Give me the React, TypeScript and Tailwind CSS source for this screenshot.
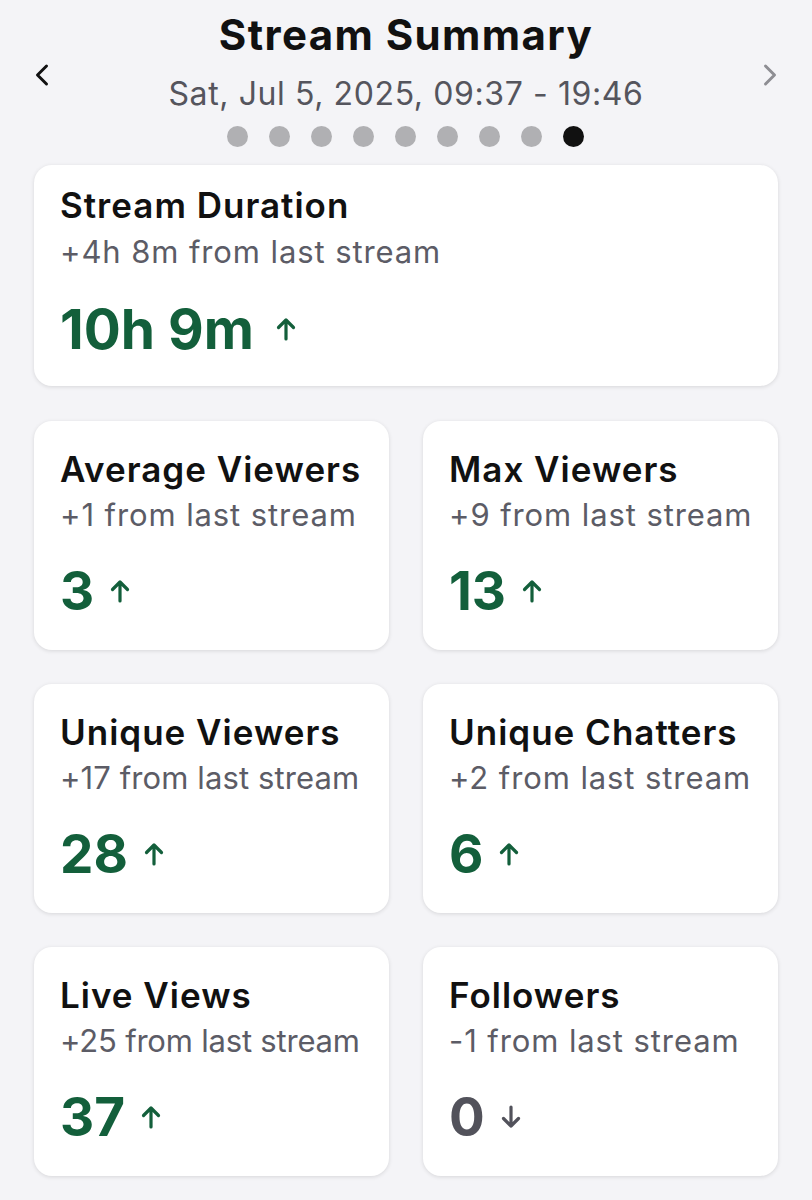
import { ChevronLeft, ChevronRight } from "lucide-react";

type Stat = {
  title: string;
  delta: string;
  value: string;
  up: boolean;
  // the app shrinks long lines to fit, so a few rows sit tighter
  tight?: string;
};

const stats: Stat[] = [
  { title: "Average Viewers", delta: "+1 from last stream", value: "3", up: true },
  { title: "Max Viewers", delta: "+9 from last stream", value: "13", up: true },
  {
    title: "Unique Viewers",
    delta: "+17 from last stream",
    value: "28",
    up: true,
    tight: "tracking-[0.1px]",
  },
  { title: "Unique Chatters", delta: "+2 from last stream", value: "6", up: true },
  {
    title: "Live Views",
    delta: "+25 from last stream",
    value: "37",
    up: true,
    tight: "tracking-[-0.2px]",
  },
  { title: "Followers", delta: "-1 from last stream", value: "0", up: false },
];

const Arrow = ({ up }: { up: boolean }) => (
  <svg
    width="20"
    height="24"
    viewBox="0 0 20 24"
    fill="none"
    stroke="currentColor"
    strokeWidth="3.2"
    strokeLinecap="round"
    strokeLinejoin="round"
    className={up ? "" : "rotate-180"}
  >
    <path d="M10 22V3M2.5 10.5L10 3l7.5 7.5" />
  </svg>
);

const StatCard = ({ stat }: { stat: Stat }) => (
  <div className="bg-white rounded-[18px] shadow-[0_1px_4px_rgba(0,0,0,0.12)] pl-[26px] pr-2 pt-[26px] h-[229px]">
    <div className="text-[35px] font-semibold text-[#111] leading-[44px] tracking-[1px] whitespace-nowrap">
      {stat.title}
    </div>
    <div
      className={`text-[31px] text-[#5c5c66] leading-[40px] mt-[4px] whitespace-nowrap ${
        stat.tight ?? "tracking-[0.9px]"
      }`}
    >
      {stat.delta}
    </div>
    <div
      className={`flex items-center gap-[16px] mt-[28px] ${
        stat.up ? "text-[#135f3b]" : "text-[#52525b]"
      }`}
    >
      <span className="text-[53px] font-bold leading-[56px]">{stat.value}</span>
      <Arrow up={stat.up} />
    </div>
  </div>
);

export default function App() {
  return (
    <div
      className="w-[812px] h-[1200px] bg-[#f4f4f7] overflow-hidden"
      style={{ fontFamily: "Inter, 'Noto Sans', sans-serif" }}
    >
      <div className="flex items-center justify-between px-[24px] pt-[8px]">
        <ChevronLeft size={36} strokeWidth={2} className="text-[#111] mt-[-6px]" />
        <div className="flex flex-col items-center">
          <div className="text-[42px] font-bold text-[#111] leading-[54px] tracking-[1.4px]">
            Stream Summary
          </div>
          <div className="text-[32px] text-[#55555d] leading-[40px] mt-[12px] tracking-[0.6px]">
            Sat, Jul 5, 2025, 09:37 - 19:46
          </div>
          <div className="flex gap-[21px] mt-[12px]">
            {Array.from({ length: 9 }).map((_, i) => (
              <div
                key={i}
                className={`w-[21px] h-[21px] rounded-full ${
                  i === 8 ? "bg-[#111]" : "bg-[#b0b0b3]"
                }`}
              />
            ))}
          </div>
        </div>
        <ChevronRight size={36} strokeWidth={2} className="text-[#8e8e93] mt-[-6px]" />
      </div>

      <div className="px-[34px] pt-[18px] flex flex-col gap-[35px]">
        <div className="bg-white rounded-[18px] shadow-[0_1px_4px_rgba(0,0,0,0.12)] pl-[26px] pt-[18px] h-[221px]">
          <div className="text-[35px] font-semibold text-[#111] leading-[44px] tracking-[1px]">
            Stream Duration
          </div>
          <div className="text-[31px] text-[#5c5c66] leading-[40px] mt-[5px] tracking-[0.9px]">
            +4h 8m from last stream
          </div>
          <div className="flex items-center gap-[22px] mt-[25px] text-[#135f3b]">
            <span className="text-[55px] font-bold leading-[64px]">10h 9m</span>
            <Arrow up />
          </div>
        </div>

        <div className="grid grid-cols-2 gap-[34px]">
          {stats.map((s) => (
            <StatCard key={s.title} stat={s} />
          ))}
        </div>
      </div>
    </div>
  );
}
